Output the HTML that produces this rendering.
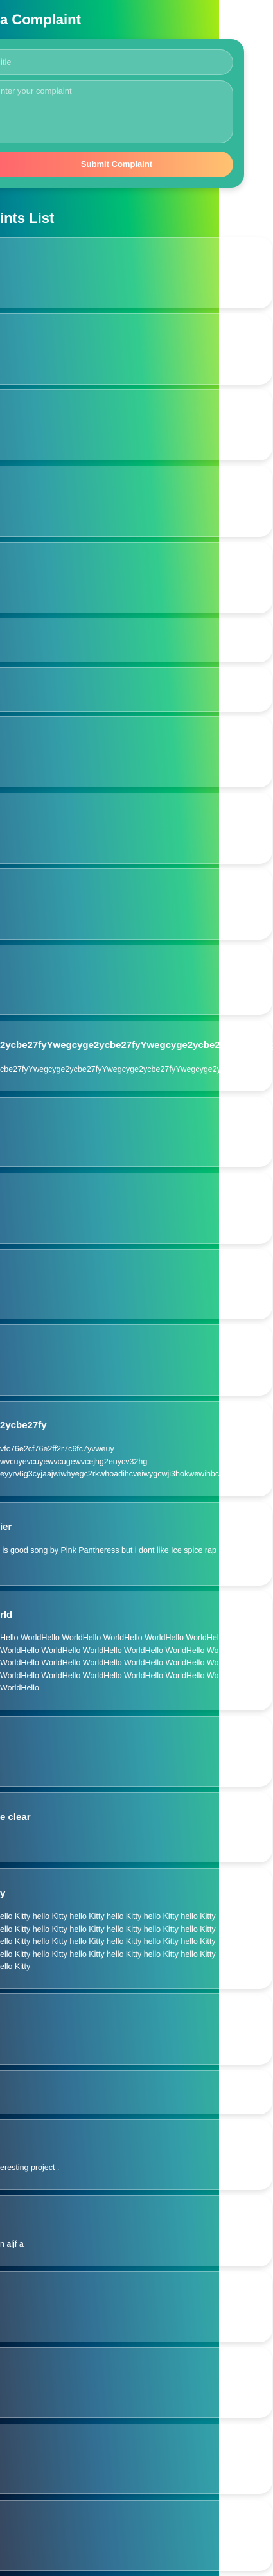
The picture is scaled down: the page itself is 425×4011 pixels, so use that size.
<!DOCTYPE html>
<html><head><meta charset="utf-8"><style>
html,body{margin:0;padding:0;width:425px;height:4011px;overflow:hidden;background:#fff;font-family:"Liberation Sans",sans-serif;color:#fff}
#wrap{position:relative;width:425px;height:4011px;overflow:hidden}
#bg{position:absolute;left:0;top:0;width:341px;height:4011px;background:linear-gradient(to right top,#051937,#004d7a,#008793,#00bf72,#a8eb12)}
.h{position:absolute;left:0;font-weight:bold;font-size:22px;white-space:nowrap}
.form{position:absolute;left:-40px;width:420px;top:61px;height:231px;background:#33b69a;border-radius:20px;box-shadow:0 4px 10px rgba(0,0,0,.15)}
.inp{position:absolute;left:-40px;width:403px;background:rgba(255,255,255,.2);border:1px solid rgba(255,255,255,.3);border-radius:20px;box-sizing:border-box;color:rgba(255,255,255,.65);font-size:13px;white-space:nowrap;padding-left:40px}
.btn{position:absolute;left:-40px;width:403px;top:236px;height:40px;border-radius:20px;background:linear-gradient(to right,#ff5f6d,#ff7f6a 40%,#ffc371);font-weight:bold;font-size:13px;text-align:center;line-height:40px}
.btn span{position:relative;left:20px}
.c{position:absolute;left:-40px;width:464px;background:rgba(255,255,255,.2);border-top:1px solid rgba(255,255,255,.35);border-bottom:1px solid rgba(255,255,255,.35);border-radius:20px;box-shadow:0 4px 8px rgba(0,0,0,.1);box-sizing:border-box;overflow:hidden}
.t,.d{position:absolute;left:0;white-space:nowrap}
.t{font-weight:bold;font-size:15px}
.d{font-size:12.5px;line-height:19.5px}
</style></head><body><div id="wrap">
<div id="bg"></div>
<div class="h" style="top:18px">a Complaint</div>
<div class="form"></div>
<div class="inp" style="top:77px;height:40px;line-height:38px">itle</div>
<div class="inp" style="top:125px;height:98px;padding-top:8px">nter your complaint</div>
<div class="btn"><span>Submit Complaint</span></div>
<div class="h" style="top:327px">ints List</div>

<div class="c" style="top:369px;height:111px"></div>
<div class="c" style="top:488px;height:111px"></div>
<div class="c" style="top:606px;height:111px"></div>
<div class="c" style="top:725px;height:111px"></div>
<div class="c" style="top:844px;height:111px"></div>
<div class="c" style="top:962px;height:69px"></div>
<div class="c" style="top:1039px;height:69px"></div>
<div class="c" style="top:1115px;height:111px"></div>
<div class="c" style="top:1234px;height:111px"></div>
<div class="c" style="top:1352px;height:111px"></div>
<div class="c" style="top:1471px;height:109px"></div>
<div class="c" style="top:1589px;height:110px"></div>
<div class="t" style="top:1619px">2ycbe27fyYwegcyge2ycbe27fyYwegcyge2ycbe27fyYwegcyge</div>
<div class="d" style="top:1656px">cbe27fyYwegcyge2ycbe27fyYwegcyge2ycbe27fyYwegcyge2ycbe27</div>
<div class="c" style="top:1708px;height:109px"></div>
<div class="c" style="top:1826px;height:111px"></div>
<div class="c" style="top:1945px;height:109px"></div>
<div class="c" style="top:2062px;height:111px"></div>
<div class="c" style="top:2182px;height:148px"></div>
<div class="t" style="top:2211px">2ycbe27fy</div>
<div class="d" style="top:2247px">vfc76e2cf76e2ff2r7c6fc7yvweuy<br>wvcuyevcuyewvcugewvcejhg2euycv32hg<br>eyyrv6g3cyjaajwiwhyegc2rkwhoadihcveiwygcwji3hokwewihbc</div>
<div class="c" style="top:2339px;height:130px"></div>
<div class="t" style="top:2369px">ier</div>
<div class="d" style="top:2405px">&nbsp;is good song by Pink Pantheress but i dont like Ice spice rap</div>
<div class="c" style="top:2477px;height:186px"></div>
<div class="t" style="top:2506px">rld</div>
<div class="d" style="top:2541px">Hello WorldHello WorldHello WorldHello WorldHello WorldHello<br>WorldHello WorldHello WorldHello WorldHello WorldHello World<br>WorldHello WorldHello WorldHello WorldHello WorldHello World<br>WorldHello WorldHello WorldHello WorldHello WorldHello World<br>WorldHello</div>
<div class="c" style="top:2672px;height:110px"></div>
<div class="c" style="top:2791px;height:109px"></div>
<div class="t" style="top:2821px">e clear</div>
<div class="c" style="top:2909px;height:188px"></div>
<div class="t" style="top:2940px">y</div>
<div class="d" style="top:2975px">ello Kitty hello Kitty hello Kitty hello Kitty hello Kitty hello Kitty<br>ello Kitty hello Kitty hello Kitty hello Kitty hello Kitty hello Kitty<br>ello Kitty hello Kitty hello Kitty hello Kitty hello Kitty hello Kitty<br>ello Kitty hello Kitty hello Kitty hello Kitty hello Kitty hello Kitty<br>ello Kitty</div>
<div class="c" style="top:3104px;height:111px"></div>
<div class="c" style="top:3223px;height:69px"></div>
<div class="c" style="top:3300px;height:110px"></div>
<div class="d" style="top:3366px">eresting project .</div>
<div class="c" style="top:3418px;height:111px"></div>
<div class="d" style="top:3485px">n aljf a</div>
<div class="c" style="top:3536px;height:111px"></div>
<div class="c" style="top:3655px;height:110px"></div>
<div class="c" style="top:3774px;height:109px"></div>
<div class="c" style="top:3893px;height:110px"></div>
</div></body></html>
